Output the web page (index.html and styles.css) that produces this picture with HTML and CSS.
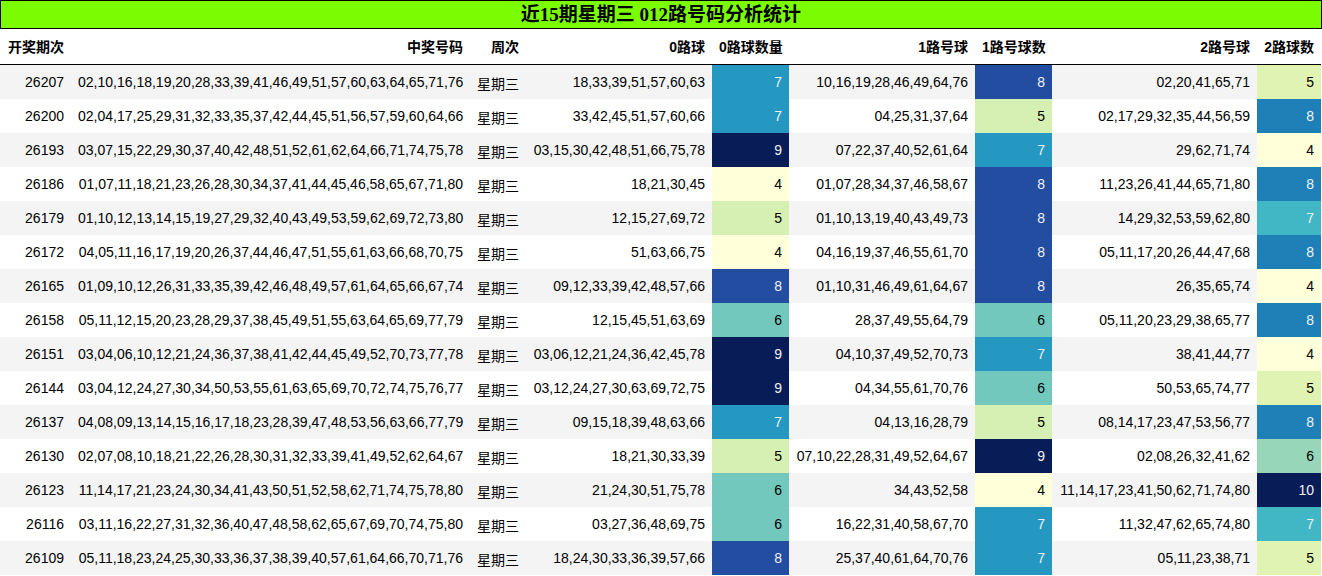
FILE: index.html
```html
<!DOCTYPE html>
<html lang="zh">
<head>
<meta charset="utf-8">
<title>近15期星期三 012路号码分析统计</title>
<link rel="stylesheet" href="styles.css">
</head>
<body>
<div class="title">近15期星期三 012路号码分析统计</div>
<table class="stats">
<colgroup>
<col class="w-qi"><col class="w-hm"><col class="w-zc"><col class="w-r0"><col class="w-n0"><col class="w-r1"><col class="w-n1"><col class="w-r2"><col class="w-n2">
</colgroup>
<thead>
<tr><th>开奖期次</th><th>中奖号码</th><th>周次</th><th>0路球</th><th>0路球数量</th><th>1路号球</th><th>1路号球数</th><th>2路号球</th><th>2路球数</th></tr>
</thead>
<tbody>
<tr><td>26207</td><td>02,10,16,18,19,20,28,33,39,41,46,49,51,57,60,63,64,65,71,76</td><td class="zc">星期三</td><td>18,33,39,51,57,60,63</td><td class="a7">7</td><td>10,16,19,28,46,49,64,76</td><td class="a8">8</td><td>02,20,41,65,71</td><td class="b5">5</td></tr>
<tr><td>26200</td><td>02,04,17,25,29,31,32,33,35,37,42,44,45,51,56,57,59,60,64,66</td><td class="zc">星期三</td><td>33,42,45,51,57,60,66</td><td class="a7">7</td><td>04,25,31,37,64</td><td class="a5">5</td><td>02,17,29,32,35,44,56,59</td><td class="b8">8</td></tr>
<tr><td>26193</td><td>03,07,15,22,29,30,37,40,42,48,51,52,61,62,64,66,71,74,75,78</td><td class="zc">星期三</td><td>03,15,30,42,48,51,66,75,78</td><td class="a9">9</td><td>07,22,37,40,52,61,64</td><td class="a7">7</td><td>29,62,71,74</td><td class="b4">4</td></tr>
<tr><td>26186</td><td>01,07,11,18,21,23,26,28,30,34,37,41,44,45,46,58,65,67,71,80</td><td class="zc">星期三</td><td>18,21,30,45</td><td class="a4">4</td><td>01,07,28,34,37,46,58,67</td><td class="a8">8</td><td>11,23,26,41,44,65,71,80</td><td class="b8">8</td></tr>
<tr><td>26179</td><td>01,10,12,13,14,15,19,27,29,32,40,43,49,53,59,62,69,72,73,80</td><td class="zc">星期三</td><td>12,15,27,69,72</td><td class="a5">5</td><td>01,10,13,19,40,43,49,73</td><td class="a8">8</td><td>14,29,32,53,59,62,80</td><td class="b7">7</td></tr>
<tr><td>26172</td><td>04,05,11,16,17,19,20,26,37,44,46,47,51,55,61,63,66,68,70,75</td><td class="zc">星期三</td><td>51,63,66,75</td><td class="a4">4</td><td>04,16,19,37,46,55,61,70</td><td class="a8">8</td><td>05,11,17,20,26,44,47,68</td><td class="b8">8</td></tr>
<tr><td>26165</td><td>01,09,10,12,26,31,33,35,39,42,46,48,49,57,61,64,65,66,67,74</td><td class="zc">星期三</td><td>09,12,33,39,42,48,57,66</td><td class="a8">8</td><td>01,10,31,46,49,61,64,67</td><td class="a8">8</td><td>26,35,65,74</td><td class="b4">4</td></tr>
<tr><td>26158</td><td>05,11,12,15,20,23,28,29,37,38,45,49,51,55,63,64,65,69,77,79</td><td class="zc">星期三</td><td>12,15,45,51,63,69</td><td class="a6">6</td><td>28,37,49,55,64,79</td><td class="a6">6</td><td>05,11,20,23,29,38,65,77</td><td class="b8">8</td></tr>
<tr><td>26151</td><td>03,04,06,10,12,21,24,36,37,38,41,42,44,45,49,52,70,73,77,78</td><td class="zc">星期三</td><td>03,06,12,21,24,36,42,45,78</td><td class="a9">9</td><td>04,10,37,49,52,70,73</td><td class="a7">7</td><td>38,41,44,77</td><td class="b4">4</td></tr>
<tr><td>26144</td><td>03,04,12,24,27,30,34,50,53,55,61,63,65,69,70,72,74,75,76,77</td><td class="zc">星期三</td><td>03,12,24,27,30,63,69,72,75</td><td class="a9">9</td><td>04,34,55,61,70,76</td><td class="a6">6</td><td>50,53,65,74,77</td><td class="b5">5</td></tr>
<tr><td>26137</td><td>04,08,09,13,14,15,16,17,18,23,28,39,47,48,53,56,63,66,77,79</td><td class="zc">星期三</td><td>09,15,18,39,48,63,66</td><td class="a7">7</td><td>04,13,16,28,79</td><td class="a5">5</td><td>08,14,17,23,47,53,56,77</td><td class="b8">8</td></tr>
<tr><td>26130</td><td>02,07,08,10,18,21,22,26,28,30,31,32,33,39,41,49,52,62,64,67</td><td class="zc">星期三</td><td>18,21,30,33,39</td><td class="a5">5</td><td>07,10,22,28,31,49,52,64,67</td><td class="a9">9</td><td>02,08,26,32,41,62</td><td class="b6">6</td></tr>
<tr><td>26123</td><td>11,14,17,21,23,24,30,34,41,43,50,51,52,58,62,71,74,75,78,80</td><td class="zc">星期三</td><td>21,24,30,51,75,78</td><td class="a6">6</td><td>34,43,52,58</td><td class="a4">4</td><td>11,14,17,23,41,50,62,71,74,80</td><td class="b10">10</td></tr>
<tr><td>26116</td><td>03,11,16,22,27,31,32,36,40,47,48,58,62,65,67,69,70,74,75,80</td><td class="zc">星期三</td><td>03,27,36,48,69,75</td><td class="a6">6</td><td>16,22,31,40,58,67,70</td><td class="a7">7</td><td>11,32,47,62,65,74,80</td><td class="b7">7</td></tr>
<tr><td>26109</td><td>05,11,18,23,24,25,30,33,36,37,38,39,40,57,61,64,66,70,71,76</td><td class="zc">星期三</td><td>18,24,30,33,36,39,57,66</td><td class="a8">8</td><td>25,37,40,61,64,70,76</td><td class="a7">7</td><td>05,11,23,38,71</td><td class="b5">5</td></tr>
</tbody>
</table>
</body>
</html>
```

FILE: styles.css
```css
html, body {
  margin: 0;
  padding: 0;
  background: #fff;
}
body {
  font-family: "Liberation Sans", Arial, "Noto Sans CJK SC", sans-serif;
  font-size: 14px;
  color: #000;
}
.title {
  width: 1320px;
  height: 27px;
  border: 1px solid #000;
  background: #7cfc00;
  text-align: center;
  font-family: "Liberation Serif", "Noto Sans CJK SC", serif;
  font-weight: bold;
  font-size: 19px;
  line-height: 28px;
}
.stats {
  border-collapse: collapse;
  table-layout: fixed;
  width: 1321px;
}
.w-qi { width: 71px; }
.w-hm { width: 399px; }
.w-zc { width: 56px; }
.w-r0 { width: 186px; }
.w-n0 { width: 77px; }
.w-r1 { width: 186px; }
.w-n1 { width: 77px; }
.w-r2 { width: 205px; }
.w-n2 { width: 64px; }
.stats th {
  height: 35px;
  padding: 0 7px;
  line-height: 16px;
  text-align: right;
  font-weight: bold;
  white-space: nowrap;
  border-bottom: 1px solid #000;
}
.stats td {
  height: 34px;
  padding: 0 7px;
  line-height: 16px;
  text-align: right;
  white-space: nowrap;
}
.stats tbody tr:nth-child(odd) { background: #f4f4f4; }
.stats tbody tr:nth-child(even) { background: #fff; }
.stats td.zc {
  height: 30px;
  padding-top: 4px;
}

/* 0路球数量 / 1路号球数: gradient range 4–9 */
.stats td.a4 { background: #ffffd9; color: #000; }
.stats td.a5 { background: #d6efb3; color: #000; }
.stats td.a6 { background: #73c8bd; color: #000; }
.stats td.a7 { background: #2498c1; color: #f1f1f1; }
.stats td.a8 { background: #234da0; color: #f1f1f1; }
.stats td.a9 { background: #081d58; color: #f1f1f1; }

/* 2路球数: gradient range 4–10 */
.stats td.b4 { background: #ffffd9; color: #000; }
.stats td.b5 { background: #e0f3b2; color: #000; }
.stats td.b6 { background: #97d6b9; color: #000; }
.stats td.b7 { background: #41b6c4; color: #f1f1f1; }
.stats td.b8 { background: #1f80b8; color: #f1f1f1; }
.stats td.b10 { background: #081d58; color: #f1f1f1; }
```
